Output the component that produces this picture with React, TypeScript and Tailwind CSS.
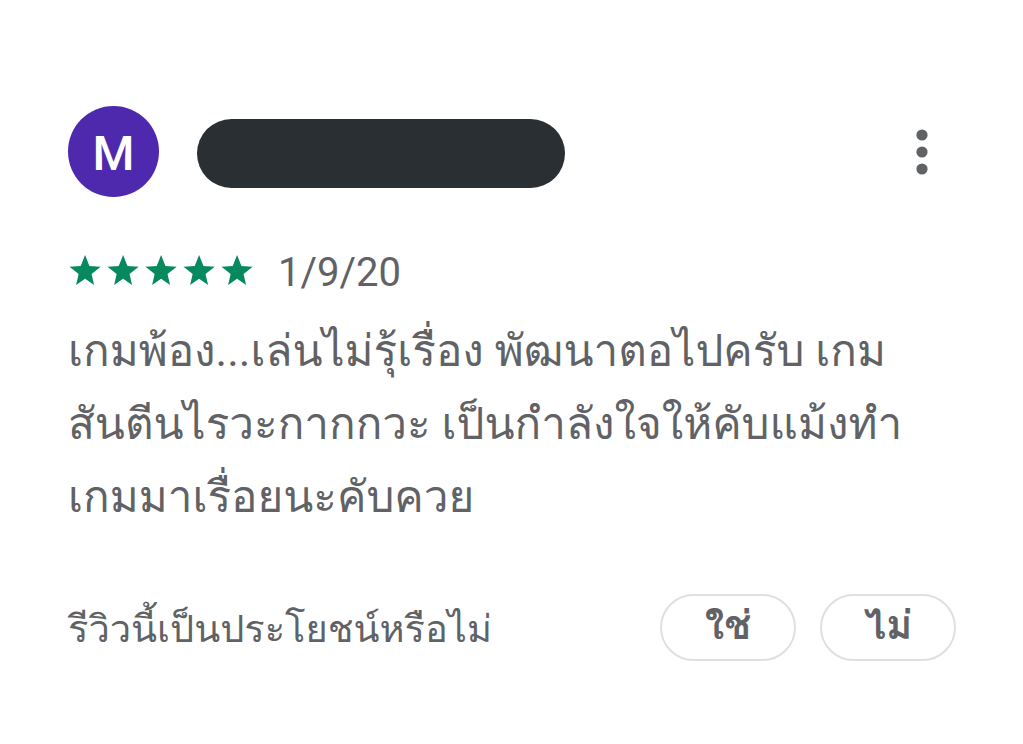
import { useState } from "react";

interface Review {
    initial: string;
    rating: number;
    date: string;
    lines: string[];
}

const review: Review = {
    initial: "M",
    rating: 5,
    date: "1/9/20",
    lines: [
        "เกมพ้อง...เล่นไม่รุ้เรื่อง พัฒนาตอไปครับ เกม",
        "สันตีนไรวะกากกวะ เป็นกำลังใจให้คับแม้งทำ",
        "เกมมาเรื่อยนะคับควย"
    ]
};

const answers = ["ใช่", "ไม่"];

function Star() {
    return (
        <svg viewBox="0 0 24 24" className="h-9 w-9" fill="#07895f" aria-hidden="true">
            <path d="M11.4 17.2 17.4 21.4l-1.7-7.4L21.8 9.2l-7.5-.6L11.4 1.3 8.5 8.6l-7.5.6 6.1 4.8L5.4 21.4z" />
        </svg>
    );
}

export default function App() {
    const [answer, setAnswer] = useState("");

    return (
        <main className="min-h-screen bg-white pt-[106px] pr-[67px] pb-16 pl-17 font-['Roboto','Loma',sans-serif] text-[#616265]">
            {/* Author */}
            <header className="flex items-center">
                <div className="flex h-[91px] w-[91px] items-center justify-center rounded-full bg-[#4e29ae] pt-1 text-5xl font-medium text-white">
                    {review.initial}
                </div>
                <div className="mt-1 ml-[38px] h-[69px] w-[368px] rounded-full bg-[#2a2f33]" />
                <button aria-label="More options" className="mr-5 ml-auto flex h-14 w-7 items-center justify-center">
                    <svg viewBox="0 0 12 48" className="h-12 w-3" fill="#616265" aria-hidden="true">
                        <circle cx="6" cy="7" r="5.6" />
                        <circle cx="6" cy="24" r="5.6" />
                        <circle cx="6" cy="41" r="5.6" />
                    </svg>
                </button>
            </header>

            {/* Rating */}
            <div className="mt-[50px] flex h-12 items-center">
                <div className="flex gap-[2px]">
                    {Array.from({ length: review.rating }, (_, index) => (
                        <Star key={index} />
                    ))}
                </div>
                <time className="ml-[22px] pt-1 text-[40px]">{review.date}</time>
            </div>

            <p className="mt-5 text-[44px] leading-[73px] whitespace-nowrap">
                {review.lines.map(line => (
                    <span key={line} className="block">{line}</span>
                ))}
            </p>

            {/* Feedback */}
            <footer className="mt-15 flex items-center">
                <p className="pt-1 text-[38px] leading-[63px] whitespace-nowrap">รีวิวนี้เป็นประโยชน์หรือไม่</p>
                <div className="ml-auto flex gap-6">
                    {answers.map(label => (
                        <button
                            key={label}
                            onClick={() => setAnswer(label)}
                            aria-pressed={answer === label}
                            className="flex h-[67px] w-[136px] items-center justify-center rounded-full border-2 border-[#dfe0e2] pb-1 text-[40px] leading-none font-bold"
                        >
                            {label}
                        </button>
                    ))}
                </div>
            </footer>
        </main>
    );
}
